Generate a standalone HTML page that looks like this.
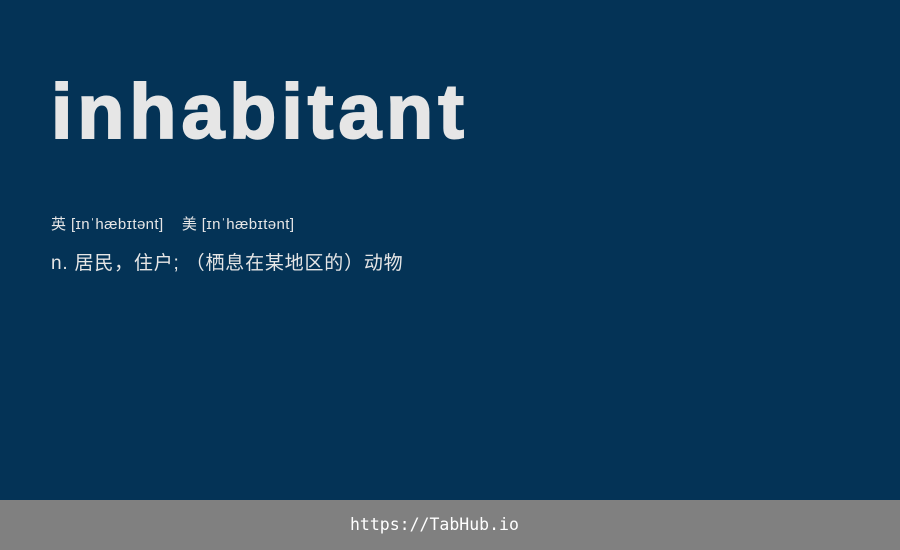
<!DOCTYPE html>
<html><head><meta charset="utf-8"><style>
body{margin:0;width:900px;height:550px;background:#043356;position:relative;overflow:hidden;font-family:"Liberation Sans","Noto Sans CJK SC",sans-serif;}
h1{position:absolute;left:51px;top:74px;margin:0;font-size:77px;font-weight:bold;color:#e6e6e6;letter-spacing:5px;line-height:76px;-webkit-text-stroke:2px #e6e6e6;}
.ph{position:absolute;left:51px;top:213px;font-size:15px;color:#e6e6e6;letter-spacing:0.4px;}
.df{position:absolute;left:51px;top:248px;font-size:19px;color:#e6e6e6;letter-spacing:0.8px;}
.ft{position:absolute;left:350px;top:500px;height:50px;color:#fff;font-family:"DejaVu Sans Mono",monospace;font-size:16.5px;line-height:50px;}
.bar{position:absolute;left:0;top:500px;width:900px;height:50px;background:#808080;}
</style></head><body>
<h1>inhabitant</h1>
<div class="ph">英 [ɪnˈhæbɪtənt]&nbsp;&nbsp;&nbsp; 美 [ɪnˈhæbɪtənt]</div>
<div class="df">n. 居民，住户; （栖息在某地区的）动物</div>
<div class="bar"></div>
<div class="ft">https://TabHub.io</div>
</body></html>
